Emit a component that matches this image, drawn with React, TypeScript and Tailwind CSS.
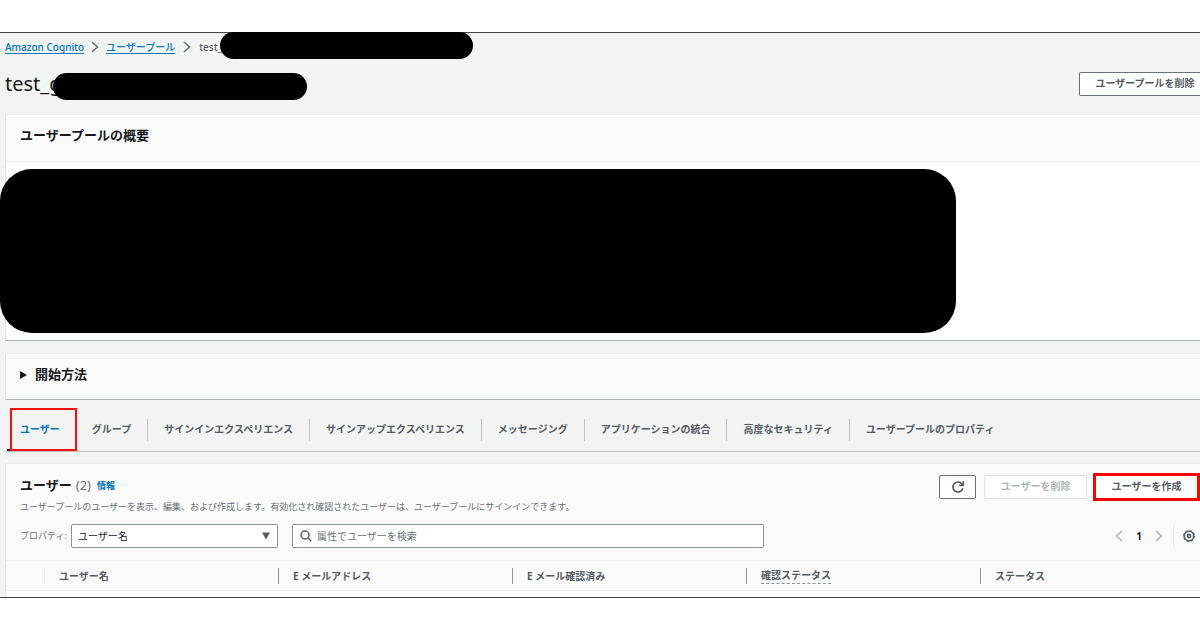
import React from 'react';
import clsx from 'clsx';

const tabs = [
  'ユーザー',
  'グループ',
  'サインインエクスペリエンス',
  'サインアップエクスペリエンス',
  'メッセージング',
  'アプリケーションの統合',
  '高度なセキュリティ',
  'ユーザープールのプロパティ',
];

const columns = [
  { label: 'ユーザー名' },
  { label: 'E メールアドレス' },
  { label: 'E メール確認済み' },
  { label: '確認ステータス', hint: true },
  { label: 'ステータス' },
];

const Chevron = ({ left, className }: { left?: boolean; className?: string }) => (
  <svg viewBox="0 0 8 12" className={clsx('w-2 h-3 shrink-0', className)} fill="none" stroke="currentColor" strokeWidth="1.6">
    <path d={left ? 'M7 1 1.5 6 7 11' : 'M1 1 6.5 6 1 11'} />
  </svg>
);

const RefreshIcon = () => (
  <svg viewBox="0 0 14 14" className="size-3.5" fill="none" stroke="currentColor" strokeWidth="1.6">
    <path d="M11.8 8.2A5 5 0 1 1 10.9 3.9L12 5.2" />
    <path d="M12.3 1.2v4.2H8.2" />
  </svg>
);

const GearIcon = () => (
  <svg viewBox="0 0 14 14" className="size-3.5" fill="none" stroke="currentColor">
    <circle cx="7" cy="7" r="4.7" strokeWidth="1.6" />
    <circle cx="7" cy="7" r="5.6" strokeWidth="1" strokeDasharray="2.2 2.2" />
    <circle cx="7" cy="7" r="1.6" strokeWidth="1.6" />
  </svg>
);

const SearchIcon = () => (
  <svg viewBox="0 0 12 12" className="absolute left-2 top-1.5 size-3 text-[#545b64]" fill="none" stroke="currentColor" strokeWidth="1.5">
    <circle cx="5" cy="5" r="4" />
    <path d="m8 8 3.3 3.3" />
  </svg>
);

const Redacted = ({ className }: { className: string }) => (
  <span aria-hidden="true" className={clsx('block bg-black shrink-0', className)} />
);

const card = 'border-l border-t border-l-[#dfe3e3] border-t-[#eaeded] border-b border-b-[#aab7b8] bg-[#fafafa]';

const Breadcrumbs = () => (
  <nav aria-label="パンくず" className="flex h-7 items-center text-[10px] font-medium">
    <a href="#cognito" className="border-b border-[#0073bb] leading-3 text-[#0073bb]">Amazon Cognito</a>
    <Chevron className="mx-[7px] text-[#687078]" />
    <a href="#pools" className="border-b border-[#0073bb] leading-3 text-[#0073bb]">ユーザープール</a>
    <Chevron className="mx-2 text-[#687078]" />
    <span className="text-[#545b64]">test_</span>
    <Redacted className="-ml-0.5 -mt-px h-[27px] w-[253px] self-start rounded-full" />
  </nav>
);

const TabBar = () => (
  <div role="tablist" className="mt-2 flex h-11 border-b border-[#bcc5c6] text-[10px] font-bold text-[#545b64]">
    {tabs.map((tab, i) => (
      <div key={tab} className="relative flex items-center">
        <button
          role="tab"
          aria-selected={i === 0}
          className={clsx('h-full whitespace-nowrap', i === 0 ? 'ml-0.5 border-b-2 border-[#16191f] pl-[13px] pr-4 pt-0.5 text-[#0073bb]' : 'px-4')}
        >
          {tab}
        </button>
        {i > 0 && i < tabs.length - 1 && <span className="h-[22px] w-px bg-[#bcc5c6]" />}
        {i === 0 && <span className="pointer-events-none absolute inset-y-0 left-[5px] -right-px border-2 border-[#fb0d0d]" />}
      </div>
    ))}
  </div>
);

const UsersTable = () => (
  <table className="w-full table-fixed border-y border-[#eaeded] text-[10px] font-bold text-[#545b64]">
    <thead>
      <tr className="h-[30px]">
        <th scope="col" className="w-[38px]" aria-label="選択" />
        {columns.map(({ label, hint }, i) => (
          <th key={label} scope="col" className={clsx('p-0 text-left', i < columns.length - 1 && 'w-[234px]')}>
            <div className={clsx('flex h-4 items-center border-l pl-[14px]', i === 0 ? 'border-[#eaeded]' : 'border-[#879596]')}>
              <span className={clsx('leading-4', hint && 'border-b border-dashed border-[#879596]')}>{label}</span>
            </div>
          </th>
        ))}
      </tr>
    </thead>
  </table>
);

const UsersPanel = () => (
  <section className={clsx(card, 'mt-[11px] border-b-0')}>
    <div className="flex justify-between pl-[14px] pt-[9px]">
      <div>
        <h2 className="flex h-[26px] items-center text-[13px] font-bold text-[#16191f]">
          ユーザー
          <span className="ml-1 font-normal text-[#687078]">(2)</span>
          <a href="#info" className="ml-1.5 text-[9px] text-[#0073bb]">情報</a>
        </h2>
        <p className="mt-0.5 text-[9px] leading-3 text-[#687078]">
          ユーザープールのユーザーを表示、編集、および作成します。有効化され確認されたユーザーは、ユーザープールにサインインできます。
        </p>
      </div>
      <div className="flex h-7 shrink-0 items-center text-[10px] font-bold">
        <button aria-label="更新" className="flex h-6 w-[37px] items-center justify-center rounded-xs border border-[#687078] bg-white text-[#545b64]">
          <RefreshIcon />
        </button>
        <button disabled className="ml-2 mr-1.5 h-6 w-[103px] rounded-xs border border-[#dfe3e3] bg-white pb-0.5 text-[#aab7b8]">
          ユーザーを削除
        </button>
        <button className="h-7 w-[107px] border-3 border-[#ff0000] bg-white pb-0.5 text-[#545b64]">ユーザーを作成</button>
      </div>
    </div>
    <div className="mt-[11px] flex h-6 items-center pl-[14px] text-[10px]">
      <label htmlFor="property" className="w-[51px] shrink-0 text-[9px] text-[#687078]">プロパティ:</label>
      <div className="relative w-[207px] shrink-0">
        <select id="property" className="block h-6 w-full appearance-none rounded-xs border border-[#879596] bg-white pl-1.5 text-[#16191f]">
          <option>ユーザー名</option>
        </select>
        <svg viewBox="0 0 8 7" className="pointer-events-none absolute right-2 top-2 h-2 w-2 text-[#545b64]" fill="currentColor">
          <path d="M0 0h8L4 7z" />
        </svg>
      </div>
      <div className="relative ml-3.5 max-w-[472px] flex-1">
        <SearchIcon />
        <input
          type="search"
          aria-label="属性でユーザーを検索"
          placeholder="属性でユーザーを検索"
          className="block h-6 w-full rounded-xs border border-[#879596] bg-white pl-6 placeholder:text-[#687078]"
        />
      </div>
      <div className="ml-auto flex items-center pr-1 font-bold text-[#16191f]">
        <button aria-label="前のページ" className="text-[#aab7b8]"><Chevron left /></button>
        <span className="mx-[13px]">1</span>
        <button aria-label="次のページ" className="text-[#aab7b8]"><Chevron /></button>
        <span className="ml-2.5 mr-2 h-6 w-px bg-[#eaeded]" />
        <button aria-label="設定" className="text-[#545b64]"><GearIcon /></button>
      </div>
    </div>
    <div className="mt-3 bg-white pb-[6px]">
      <div className="bg-[#fafafa]"><UsersTable /></div>
    </div>
  </section>
);

export default function App() {
  return (
    <div className="bg-white py-8 font-['Noto_Sans','Noto_Sans_CJK_JP',sans-serif]">
      <main className="overflow-x-clip border-y border-[#414345] bg-[#f2f3f3] pl-[5px]">
        <Breadcrumbs />
        <div className="mt-[11px] flex h-7 items-start justify-between">
          <h1 className="flex items-start text-[20px] leading-6 text-[#16191f]">
            test_g
            <Redacted className="-ml-2 mt-px h-[27px] w-[254px] rounded-full" />
          </h1>
          <button className="h-6 w-[121px] rounded-l-xs border border-r-0 border-[#687078] bg-white pb-0.5 pl-2.5 text-[10px] font-bold text-[#545b64]">
            ユーザープールを削除
          </button>
        </div>

        <section className={clsx(card, 'mt-3.5')}>
          <h2 className="flex h-[47px] items-center border-b border-[#eaeded] pb-1 pl-[14px] text-[13px] font-bold text-[#16191f]">
            ユーザープールの概要
          </h2>
          <div className="bg-white py-[7px]">
            <Redacted className="-ml-1.5 mr-[244px] h-[164px] rounded-[32px]" />
          </div>
        </section>

        <section className={clsx(card, 'mt-3')}>
          <button aria-expanded="false" className="flex h-[45px] w-full items-center gap-2 pb-1 pl-[14px] text-[13px] font-bold text-[#16191f]">
            <svg viewBox="0 0 7 8" className="h-2 w-[7px]" fill="currentColor">
              <path d="M0 0 7 4 0 8z" />
            </svg>
            開始方法
          </button>
        </section>

        <TabBar />
        <UsersPanel />
      </main>
    </div>
  );
}
